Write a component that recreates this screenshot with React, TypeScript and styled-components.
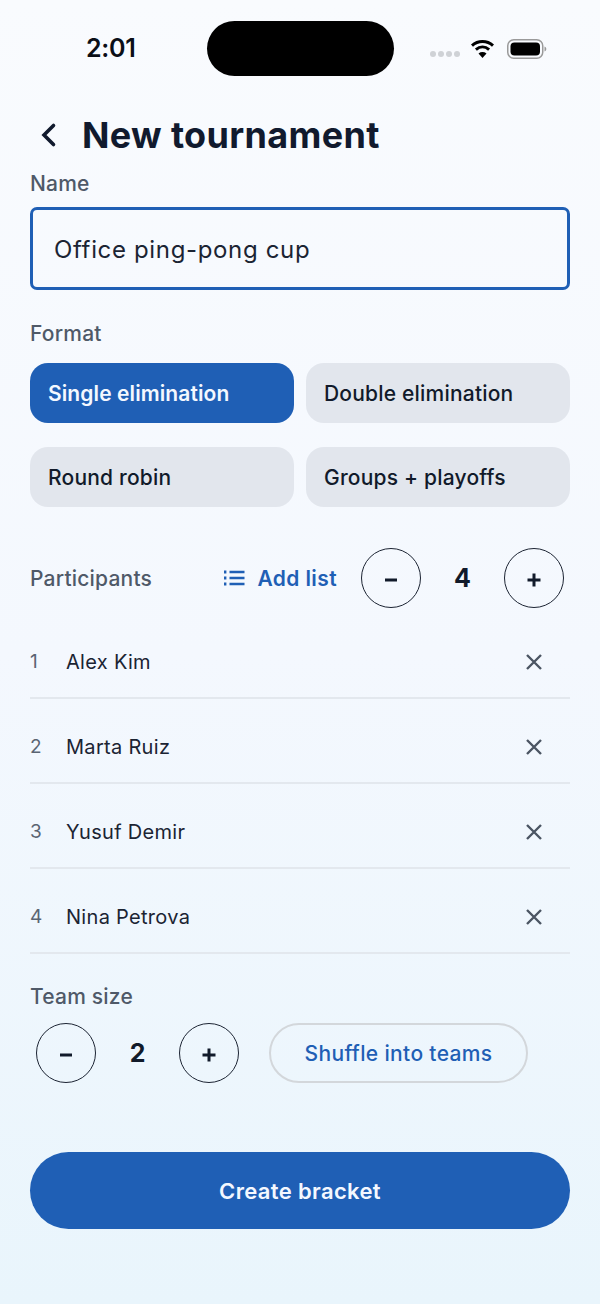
import React from "react";
import styled, { createGlobalStyle } from "styled-components";

const Global = createGlobalStyle`
  html, body { margin: 0; padding: 0; }
  body { font-family: Inter, "Noto Sans", sans-serif; color: #111827; }
  * { box-sizing: border-box; }
`;

const Page = styled.div`
  width: 600px;
  height: 1304px;
  overflow: hidden;
  background: linear-gradient(180deg, #f9fbfe 0%, #f4f8fe 50%, #e9f5fc 100%);
  display: flex;
  flex-direction: column;
`;
const StatusBar = styled.div`
  height: 76px;
  padding: 21px 0 0 86px;
  display: flex;
  align-items: flex-start;
  flex: none;
`;
const Time = styled.div`
  width: 121px;
  height: 55px;
  line-height: 55px;
  font-size: 25px;
  font-weight: 600;
  letter-spacing: -0.3px;
  color: #0b0f17;
`;
const Island = styled.div`
  width: 187px;
  height: 55px;
  border-radius: 28px;
  background: #000;
`;
const StatusIcons = styled.div`
  height: 55px;
  margin-left: 36px;
  display: flex;
  align-items: center;
`;
const Dots = styled.div`
  display: flex;
  gap: 2px;
  margin: 11px 10px 0 0;
`;
const Dot = styled.span`
  width: 6px;
  height: 6px;
  border-radius: 50%;
  background: #cfd2d6;
`;
const Content = styled.div`
  padding: 0 30px;
  display: flex;
  flex-direction: column;
`;
const Header = styled.div`
  height: 68px;
  margin-top: 25px;
  display: flex;
  align-items: center;
  gap: 25px;
  padding-left: 9px;
`;
const Title = styled.h1`
  margin: 0;
  font-size: 36px;
  line-height: 40px;
  font-weight: 700;
  letter-spacing: 0.35px;
  color: #111a2e;
`;
const Label = styled.div`
  font-size: 21px;
  line-height: 26px;
  font-weight: 500;
  letter-spacing: 0.2px;
  color: #4f5968;
`;
const NameLabel = styled(Label)`
  margin-top: 2px;
`;
const NameBox = styled.div`
  margin-top: 10px;
  height: 83px;
  border: 3px solid #1f5fb5;
  border-radius: 7px;
  padding: 2px 0 0 21px;
  display: flex;
  align-items: center;
  font-size: 24px;
  letter-spacing: 0.65px;
  color: #1b2433;
`;
const FormatLabel = styled(Label)`
  margin-top: 31px;
`;
const Chips = styled.div`
  margin-top: 16px;
  display: grid;
  grid-template-columns: 1fr 1fr;
  column-gap: 12px;
  row-gap: 24px;
`;
const Chip = styled.div<{ $active?: boolean }>`
  height: 60px;
  border-radius: 18px;
  padding-left: 18px;
  display: flex;
  align-items: center;
  font-size: 21px;
  font-weight: ${(p) => (p.$active ? 600 : 500)};
  letter-spacing: ${(p) => (p.$active ? "0.1px" : "0.2px")};
  background: ${(p) => (p.$active ? "#1f5fb5" : "#e2e6ed")};
  color: ${(p) => (p.$active ? "#f4f8ff" : "#111a2a")};
`;
const ParticipantsRow = styled.div`
  margin-top: 41px;
  height: 60px;
  display: flex;
  align-items: center;
  padding-right: 6px;
`;
const ParticipantsLabel = styled(Label)`
  margin-top: 2px;
`;
const AddList = styled.div`
  margin-left: auto;
  display: flex;
  align-items: center;
  gap: 12px;
  font-size: 21px;
  font-weight: 600;
  letter-spacing: 0.4px;
  color: #1f5fb5;
  margin-right: 24px;
`;
const Stepper = styled.div`
  display: flex;
  align-items: center;
`;
const Round = styled.div`
  width: 60px;
  height: 60px;
  border-radius: 50%;
  border: 1.8px solid #1c2433;
  display: flex;
  align-items: center;
  justify-content: center;
  padding-top: 3px;
  flex: none;
`;
const Count = styled.div`
  width: 83px;
  text-align: center;
  font-size: 25px;
  font-weight: 700;
  color: #111a2a;
`;
const List = styled.div`
  margin-top: 6px;
  display: flex;
  flex-direction: column;
`;
const Row = styled.div`
  height: 85px;
  padding: 12px 28px 0 0;
  border-bottom: 2px solid #e3e8ee;
  display: flex;
  align-items: center;
`;
const Num = styled.div`
  width: 36px;
  font-size: 19px;
  color: #5a6472;
`;
const Person = styled.div`
  flex: 1;
  font-size: 20px;
  letter-spacing: 0.3px;
  color: #1b2433;
`;
const TeamLabel = styled(Label)`
  margin-top: 30px;
`;
const TeamRow = styled.div`
  margin-top: 13px;
  padding-left: 6px;
  display: flex;
  align-items: center;
  gap: 30px;
`;
const Shuffle = styled.div`
  width: 259px;
  height: 60px;
  border-radius: 30px;
  border: 2px solid #d3d7db;
  display: flex;
  align-items: center;
  justify-content: center;
  font-size: 21px;
  font-weight: 500;
  letter-spacing: 0.35px;
  color: #1f5fb5;
`;
const Create = styled.div`
  margin-top: 69px;
  height: 77px;
  border-radius: 39px;
  background: #1f5fb5;
  display: flex;
  align-items: center;
  justify-content: center;
  font-size: 22px;
  font-weight: 600;
  letter-spacing: 0.35px;
  color: #f4f8ff;
`;

const Minus = () => (
  <svg width="16" height="16" viewBox="0 0 16 16" fill="none">
    <path d="M2 8h12" stroke="#111a2a" strokeWidth="3" />
  </svg>
);
const Plus = () => (
  <svg width="16" height="16" viewBox="0 0 16 16" fill="none">
    <path d="M1.5 8h13M8 1.5v13" stroke="#111a2a" strokeWidth="3" />
  </svg>
);
const Close = () => (
  <svg width="16" height="16" viewBox="0 0 16 16" fill="none">
    <path d="M1 1l14 14M15 1L1 15" stroke="#4b5563" strokeWidth="2.4" />
  </svg>
);

const people = ["Alex Kim", "Marta Ruiz", "Yusuf Demir", "Nina Petrova"];

export default function App() {
  return (
    <Page>
      <Global />
      <StatusBar>
        <Time>2:01</Time>
        <Island />
        <StatusIcons>
          <Dots>
            <Dot />
            <Dot />
            <Dot />
            <Dot />
          </Dots>
          <svg width="25" height="20" viewBox="0 0 24 20" fill="none" style={{ marginRight: 12 }}>
            <path d="M1.5 6.6C7.5 1.2 16.5 1.2 22.5 6.6" stroke="#000" strokeWidth="3" />
            <path d="M5.4 10.6c4-3.5 9.2-3.5 13.2 0" stroke="#000" strokeWidth="3" />
            <path d="M12 19l-4-4.6c2.4-1.8 5.6-1.8 8 0z" fill="#000" />
          </svg>
          <svg width="40" height="20" viewBox="0 0 40 20" fill="none">
            <rect x="0.75" y="0.75" width="35" height="18.5" rx="6" stroke="#9a9a9a" strokeWidth="1.5" />
            <rect x="3.5" y="3.5" width="29.5" height="13" rx="4" fill="#000" />
            <path d="M37.5 7.5c1.2.4 1.8 1.4 1.8 2.5s-.6 2.1-1.8 2.5z" fill="#9a9a9a" />
          </svg>
        </StatusIcons>
      </StatusBar>
      <Content>
        <Header>
          <svg width="18" height="26" viewBox="0 0 18 26" fill="none">
            <path d="M14.5 3.5L5 13l9.5 9.5" stroke="#111a2e" strokeWidth="3.6" strokeLinecap="round" />
          </svg>
          <Title>New tournament</Title>
        </Header>
        <NameLabel>Name</NameLabel>
        <NameBox>Office ping-pong cup</NameBox>
        <FormatLabel>Format</FormatLabel>
        <Chips>
          <Chip $active>Single elimination</Chip>
          <Chip>Double elimination</Chip>
          <Chip>Round robin</Chip>
          <Chip>Groups + playoffs</Chip>
        </Chips>
        <ParticipantsRow>
          <ParticipantsLabel>Participants</ParticipantsLabel>
          <AddList>
            <svg width="22" height="18" viewBox="0 0 22 18" fill="none">
              <path d="M6.5 3h15M6.5 9h15M6.5 15h15" stroke="#1f5fb5" strokeWidth="2.4" />
              <path d="M1 3h2.4M1 9h2.4M1 15h2.4" stroke="#1f5fb5" strokeWidth="2.8" />
            </svg>
            Add list
          </AddList>
          <Stepper>
            <Round>
              <Minus />
            </Round>
            <Count>4</Count>
            <Round>
              <Plus />
            </Round>
          </Stepper>
        </ParticipantsRow>
        <List>
          {people.map((name, i) => (
            <Row key={name}>
              <Num>{i + 1}</Num>
              <Person>{name}</Person>
              <Close />
            </Row>
          ))}
        </List>
        <TeamLabel>Team size</TeamLabel>
        <TeamRow>
          <Stepper>
            <Round>
              <Minus />
            </Round>
            <Count>2</Count>
            <Round>
              <Plus />
            </Round>
          </Stepper>
          <Shuffle>Shuffle into teams</Shuffle>
        </TeamRow>
        <Create>Create bracket</Create>
      </Content>
    </Page>
  );
}
